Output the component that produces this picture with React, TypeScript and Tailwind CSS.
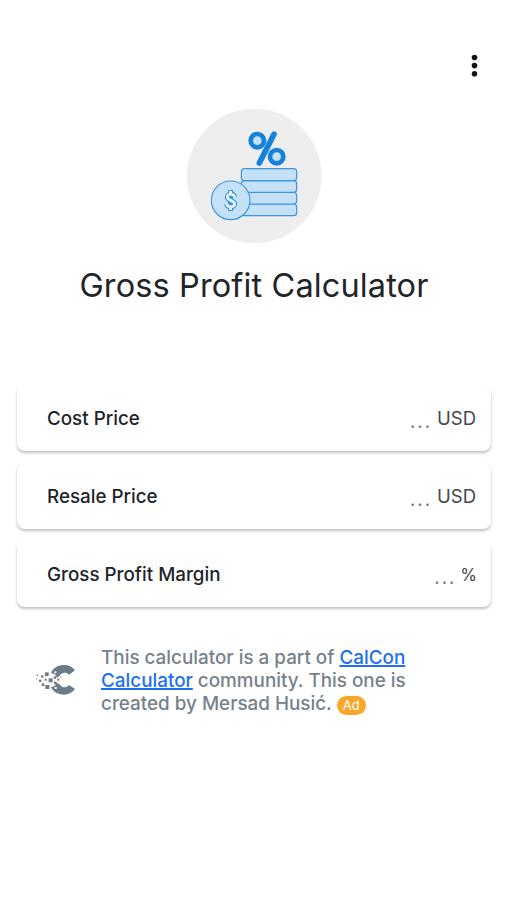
import { useState } from 'react';

interface Field {
  label: string;
  unit: string;
}

const fields: Field[] = [
  { label: 'Cost Price', unit: 'USD' },
  { label: 'Resale Price', unit: 'USD' },
  { label: 'Gross Profit Margin', unit: '%' },
];

function CoinsIcon() {
  return (
    <svg className="block w-[136px] h-[136px]" viewBox="21 24 408 408" fill="none">
      <circle cx="223" cy="228" r="202" fill="#eeeeee" />

      {/* Percent sign */}
      <circle cx="232" cy="122" r="20" fill="#c5e1f8" stroke="#1583dc" strokeWidth="14" />
      <circle cx="290" cy="170" r="20" fill="#c5e1f8" stroke="#1583dc" strokeWidth="14" />
      <path d="M282 103L238 189" stroke="#1583dc" strokeWidth="17" strokeLinecap="round" />

      {/* Stack of coins */}
      <g fill="#c5e1f8" stroke="#3a96e0" strokeWidth="3.5">
        <rect x="184" y="312" width="166" height="35" rx="9" />
        <rect x="184" y="277" width="166" height="35" rx="9" />
        <rect x="184" y="242" width="166" height="35" rx="9" />
        <rect x="184" y="206" width="166" height="36" rx="9" />
        <circle cx="152" cy="301" r="58" />
      </g>

      {/* Dollar sign */}
      <path d="M152 270V333M164 291C162 280 142 280 142 291C142 303 164 300 164 312C164 323 142 323 140 312" stroke="#3a96e0" strokeWidth="15" strokeLinejoin="round" />
      <path d="M152 273V283M152 320V330M164 291C162 280 142 280 142 291C142 303 164 300 164 312C164 323 142 323 140 312" stroke="#eef5fb" strokeWidth="8" strokeLinejoin="round" />
    </svg>
  );
}

function CalConLogo() {
  return (
    <svg className="block w-10 h-9" viewBox="0 0 120 108" fill="#6b7b88">
      <path d="M117 25C107 11 90 6 74 10C60 13 50 21 45 32L58 38L63 48L72 40C77 31 91 29 99 38Z" />
      <path d="M117 81C107 95 90 101 74 97C60 94 50 87 45 76L57 71L63 62L72 68C77 77 91 79 99 69Z" />
      <rect x="27" y="31" width="11" height="11" />
      <rect x="38" y="49" width="12" height="12" />
      <rect x="28" y="69" width="12" height="12" />
      <rect x="15" y="40" width="7" height="7" />
      <rect x="9" y="53" width="7" height="7" />
      <rect x="17" y="64" width="8" height="8" />
      <rect x="26" y="50" width="6" height="6" />
      <rect x="2" y="38" width="4" height="4" />
      <rect x="0" y="49" width="3" height="3" />
      <rect x="53" y="43" width="7" height="7" />
      <rect x="54" y="59" width="8" height="8" />
      <rect x="64" y="50" width="6" height="6" />
      <rect x="72" y="43" width="3" height="3" />
      <g fill="#ffffff">
        <rect x="55" y="28" width="6" height="6" />
        <rect x="49" y="37" width="5" height="5" />
        <rect x="56" y="75" width="6" height="6" />
        <rect x="48" y="68" width="5" height="5" />
      </g>
    </svg>
  );
}

export default function App() {
  const [values, setValues] = useState<string[]>(['', '', '']);

  const handleChange = (index: number, value: string) => {
    setValues(prev => prev.map((v, i) => (i === index ? value : v)));
  };

  return (
    <div className="min-h-screen bg-white font-['Inter',sans-serif] text-[#212529]">
      {/* Menu */}
      <header className="flex h-[108px] justify-end pt-[54px] pr-[28px]">
        <button type="button" aria-label="Menu" className="h-6 w-2">
          <svg className="block w-2 h-6" viewBox="0 0 8 24" fill="#111418">
            <circle cx="3.5" cy="3.5" r="2.8" />
            <circle cx="3.5" cy="11.6" r="2.8" />
            <circle cx="3.5" cy="19.7" r="2.8" />
          </svg>
        </button>
      </header>

      <div className="pl-[187px]">
        <CoinsIcon />
      </div>
      <h1 className="mt-[22px] h-[39px] pl-px text-center text-[32.5px] leading-10 font-[440] tracking-[0.12px] whitespace-nowrap">
        Gross Profit Calculator
      </h1>

      {/* Fields */}
      <form className="mt-20 flex flex-col gap-3 pl-[17px] pr-4">
        {fields.map((field, i) => (
          <label
            key={field.label}
            className="flex h-[66px] items-center rounded-lg bg-white pt-[2px] pl-[30px] pr-[15px] text-[18.5px] shadow-[0_2px_3px_rgba(0,0,0,0.25)]"
          >
            <span className="text-[18.8px] font-[470] whitespace-nowrap">{field.label}</span>
            <input
              value={values[i]}
              onChange={(e) => handleChange(i, e.target.value)}
              placeholder="..."
              className="min-w-0 flex-1 pt-[5px] text-right tracking-[2px] outline-none placeholder:text-[#70767b]"
            />
            {field.unit === '%' ? (
              <span className="-mr-px ml-1 pt-px text-[17px] text-[#43484c]">%</span>
            ) : (
              <span className="ml-[5px] text-[#43484c]">{field.unit}</span>
            )}
          </label>
        ))}
      </form>

      {/* Credits */}
      <footer className="mt-[39px] flex pl-[36px]">
        <div className="mt-4 w-[65px]">
          <CalConLogo />
        </div>
        <p className="text-[18.85px] leading-[23px] font-[490] whitespace-nowrap text-[#75818b]">
          This calculator is a part of{' '}
          <a href="#" className="text-[#1b6ff0] underline decoration-[1.5px]">CalCon</a>
          <br />
          <a href="#" className="text-[#1b6ff0] underline decoration-[1.5px]">Calculator</a> community. This one is
          <br />
          created by Mersad Husić.{' '}
          <span className="inline-block h-[19px] rounded-full bg-[#f9a72b] px-[6px] text-[13px] leading-[19px] font-normal text-white">
            Ad
          </span>
        </p>
      </footer>
    </div>
  );
}
